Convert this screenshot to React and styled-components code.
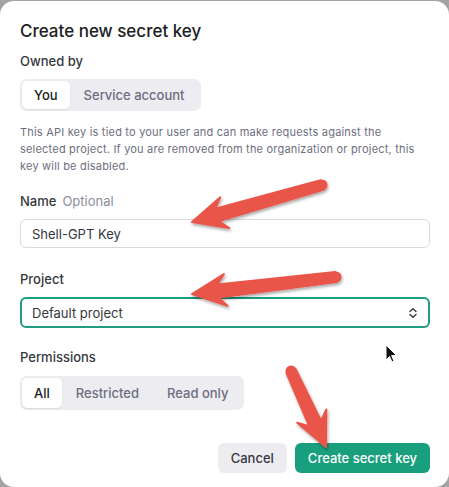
import styled, { createGlobalStyle } from "styled-components";

const GlobalStyle = createGlobalStyle`
  body {
    margin: 0;
    background: #a3a3a3;
    font-family: Inter, "Liberation Sans", sans-serif;
    overflow: hidden;
  }
`;

const Card = styled.div`
  position: relative;
  margin-top: 1px;
  width: 449px;
  height: 486px;
  box-sizing: border-box;
  padding: 18px 19px 0 20px;
  background: #fff;
  border-radius: 14px;
  display: flex;
  flex-direction: column;
`;

const Title = styled.h2`
  margin: 0;
  font-size: 17px;
  line-height: 24px;
  font-weight: 500;
  color: #202123;
`;

const Label = styled.div`
  margin-top: ${(p) => p.$top}px;
  font-size: 13px;
  line-height: 18px;
  font-weight: 500;
  color: #353740;
`;

const Optional = styled.span`
  margin-left: 6px;
  font-weight: 400;
  color: #8e8ea0;
`;

const Segmented = styled.div`
  align-self: flex-start;
  display: flex;
  margin-top: ${(p) => p.$top}px;
  padding: 2px;
  background: #ececf1;
  border-radius: 7px;
`;

const Segment = styled.button`
  border: none;
  font-family: inherit;
  font-size: 13px;
  font-weight: 500;
  height: ${(p) => p.$h}px;
  padding: 0 ${(p) => p.$px}px;
  border-radius: 5px;
  color: ${(p) => (p.$active ? "#202123" : "#6e6e80")};
  background: ${(p) => (p.$active ? "#fff" : "transparent")};
  box-shadow: ${(p) => (p.$active ? "0 1px 2px rgba(0,0,0,0.08)" : "none")};
`;

const Note = styled.p`
  margin: 13px 0 0;
  font-size: 11px;
  line-height: 17px;
  letter-spacing: 0.2px;
  color: #6e6e80;
  white-space: nowrap;
`;

const Field = styled.div`
  margin-top: 9px;
  height: 27px;
  border: ${(p) => (p.$focused ? "2px solid #1e9c82" : "1px solid #d9d9e3")};
  padding: 0 ${(p) => (p.$focused ? 10 : 11)}px;
  border-radius: 6px;
  display: flex;
  align-items: center;
  justify-content: space-between;
  font-size: 13px;
  color: #353740;
`;

const Footer = styled.div`
  margin-top: 33px;
  display: flex;
  justify-content: flex-end;
  gap: 8px;
`;

const Button = styled.button`
  border: none;
  height: 30px;
  padding: 0 13px;
  border-radius: 6px;
  font-family: inherit;
  font-size: 13px;
  font-weight: 500;
  color: ${(p) => (p.$primary ? "#fff" : "#353740")};
  background: ${(p) => (p.$primary ? "#199f7e" : "#ececf1")};
`;

const Overlay = styled.svg`
  position: absolute;
  left: 0;
  top: 0;
  pointer-events: none;
`;

function arrowPoints(tx, ty, hx, hy) {
  const dx = hx - tx;
  const dy = hy - ty;
  const len = Math.hypot(dx, dy);
  const ux = dx / len;
  const uy = dy / len;
  const nx = -uy;
  const ny = ux;
  const headLen = 32;
  const baseX = hx - ux * headLen;
  const baseY = hy - uy * headLen;
  const pts = [
    [tx + nx * 5, ty + ny * 5],
    [baseX + nx * 6.5 + ux * 6, baseY + ny * 6.5 + uy * 6],
    [baseX + nx * 16 - ux * 2, baseY + ny * 16 - uy * 2],
    [hx, hy],
    [baseX - nx * 16 - ux * 2, baseY - ny * 16 - uy * 2],
    [baseX - nx * 6.5 + ux * 6, baseY - ny * 6.5 + uy * 6],
    [tx - nx * 5, ty - ny * 5],
  ];
  return pts.map((p) => p.map((v) => v.toFixed(1)).join(",")).join(" ");
}

const arrows = [
  [322, 184, 192, 221],
  [336, 276, 192, 293],
  [291, 370, 326, 446],
];

const Arrows = () => (
  <Overlay width="449" height="486" viewBox="0 0 449 486">
    <defs>
      <filter id="sh" x="-20%" y="-20%" width="140%" height="140%">
        <feDropShadow dx="1" dy="2" stdDeviation="1.5" floodColor="#000" floodOpacity="0.35" />
      </filter>
    </defs>
    {arrows.map((a, i) => (
      <g key={i} filter="url(#sh)">
        <polygon points={arrowPoints(...a)} fill="#ea5549" strokeLinejoin="round" stroke="#ea5549" strokeWidth="2" />
        <circle cx={a[0]} cy={a[1]} r="5.5" fill="#ea5549" />
      </g>
    ))}
    <path
      d="M386 344 L386 359 L389.5 355.5 L392 361 L394 360 L391.6 354.6 L396.5 354.5 Z"
      fill="#111"
      stroke="#fff"
      strokeWidth="1"
      strokeLinejoin="round"
    />
  </Overlay>
);

const Chevrons = () => (
  <svg width="10" height="12" viewBox="0 0 10 12" fill="none" stroke="#353740" strokeWidth="1.4" strokeLinecap="round" strokeLinejoin="round">
    <path d="M2 4.5 L5 1.8 L8 4.5" />
    <path d="M2 7.5 L5 10.2 L8 7.5" />
  </svg>
);

export default function App() {
  return (
    <>
      <GlobalStyle />
      <Card>
        <Title>Create new secret key</Title>
        <Label $top={9}>Owned by</Label>
        <Segmented $top={9}>
          <Segment $active $h={28} $px={12}>You</Segment>
          <Segment $h={28} $px={14}>Service account</Segment>
        </Segmented>
        <Note>
          This API key is tied to your user and can make requests against the
          <br />
          selected project. If you are removed from the organization or project, this
          <br />
          key will be disabled.
        </Note>
        <Label $top={17}>
          Name<Optional>Optional</Optional>
        </Label>
        <Field>Shell-GPT Key</Field>
        <Label $top={22}>Project</Label>
        <Field $focused>
          Default project
          <Chevrons />
        </Field>
        <Label $top={20}>Permissions</Label>
        <Segmented $top={10}>
          <Segment $active $h={30} $px={12}>All</Segment>
          <Segment $h={30} $px={14}>Restricted</Segment>
          <Segment $h={30} $px={14}>Read only</Segment>
        </Segmented>
        <Footer>
          <Button>Cancel</Button>
          <Button $primary>Create secret key</Button>
        </Footer>
        <Arrows />
      </Card>
    </>
  );
}
